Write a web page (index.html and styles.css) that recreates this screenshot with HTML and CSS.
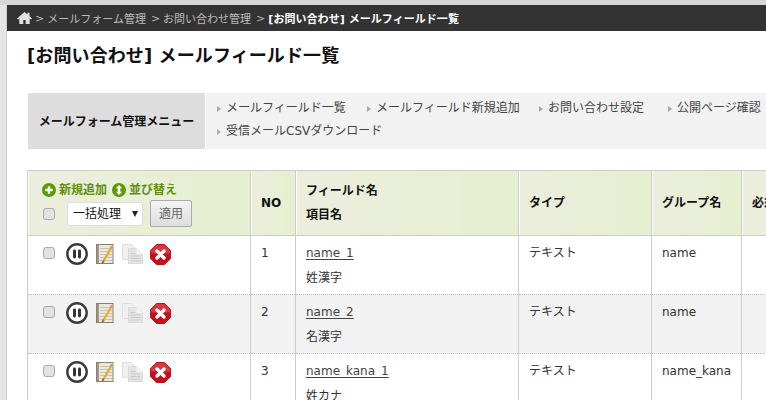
FILE: index.html
```html
<!DOCTYPE html>
<html lang="ja">
<head>
<meta charset="utf-8">
<title>メールフィールド一覧</title>
<link rel="stylesheet" href="styles.css">
</head>
<body>
<svg class="defs" width="0" height="0">
  <defs>
    <symbol id="pause" viewBox="0 0 22 22">
      <circle cx="11" cy="11" r="9.700" fill="#fff" stroke="#3a3a3a" stroke-width="2.400"/>
      <rect x="7" y="6.500" width="3" height="9" rx="1.400" fill="#333"/>
      <rect x="12" y="6.500" width="3" height="9" rx="1.400" fill="#333"/>
    </symbol>
    <symbol id="edit" viewBox="0 0 18 20">
      <rect x=".5" y=".5" width="16.500" height="19" fill="#ece8df" stroke="#8d7d6a"/>
      <rect x="1" y="1" width="2" height="18" fill="#a39887"/>
      <path d="M4 4.500h12M4 7.500h12M4 10.500h12M4 13.500h12M4 16.500h12" stroke="#bdb7ab" stroke-width=".8"/>
      <path d="M16 2.500 7 18" stroke="#e2ae2c" stroke-width="2.200"/>
      <path d="M16 2.500 14.900 4.400" stroke="#ee8a70" stroke-width="2.400"/>
      <path d="M7.800 16.600 6.200 19.400" stroke="#8a6a30" stroke-width="1.600"/>
    </symbol>
    <symbol id="copy" viewBox="0 0 21 20">
      <path d="M.5.500h9l3 3v12H.5z" fill="#f0f0f0" stroke="#e0e0e0"/>
      <path d="M6.500 4.500h8l6 5.500v9.500h-14z" fill="#e4e4e4" stroke="#dadada"/>
      <path d="M14.500 4.500v5.500h6z" fill="#f4f4f4"/>
      <path d="M8.500 9.500h5M8.500 12h10M8.500 14.500h10M8.500 17h10" stroke="#cbcbcb"/>
    </symbol>
    <symbol id="del" viewBox="0 0 21 21">
      <path d="M6.500 .5h8L20.500 6.500v8L14.500 20.500h-8L.5 14.500v-8z" fill="#c3101c" stroke="#c3101c" stroke-linejoin="round"/>
      <path d="M6.500 1h8l5.500 5.500v3H1v-3z" fill="#d63a40"/>
      <path d="M7 7l7 7M14 7l-7 7" stroke="#fff" stroke-width="3.400" stroke-linecap="round"/>
    </symbol>
  </defs>
</svg>
<div class="page">
  <nav class="crumbs">
    <svg class="home" viewBox="0 0 15 12" width="15" height="12"><path d="M7.500 0 0 6.500l1 1L2.300 6.400V12h4V8h2.400v4h4V6.400L14 7.500l1-1-2.500-2.200V.8h-2v1.800z" fill="#e2e2e2"/></svg>
    <span class="sep">&gt;</span><span>メールフォーム管理</span>
    <span class="sep">&gt;</span><span>お問い合わせ管理</span>
    <span class="sep">&gt;</span><b class="current">[お問い合わせ] メールフィールド一覧</b>
  </nav>
  <main class="content">
    <h1 class="title">[お問い合わせ] メールフィールド一覧</h1>
    <section class="menu">
      <h2 class="menu-head">メールフォーム管理メニュー</h2>
      <ul class="menu-list">
        <li class="w150">メールフィールド一覧</li>
        <li class="w172">メールフィールド新規追加</li>
        <li class="w129">お問い合わせ設定</li>
        <li class="w95">公開ページ確認</li>
        <li>受信メールCSVダウンロード</li>
      </ul>
    </section>
    <table class="grid">
      <colgroup><col class="c1"><col class="c2"><col class="c3"><col class="c4"><col class="c5"><col class="c6"></colgroup>
      <thead>
        <tr>
          <th class="tools">
            <div class="actions">
              <a class="act"><svg viewBox="0 0 14 14" width="14" height="14"><circle cx="7" cy="7" r="7" fill="#5b9a00"/><path d="M7 3.300v7.400M3.300 7h7.400" stroke="#fff" stroke-width="2.400"/></svg>新規追加</a>
              <a class="act"><svg viewBox="0 0 14 14" width="14" height="14"><circle cx="7" cy="7" r="7" fill="#5b9a00"/><path d="M7 2 10.200 5.300H8.300v3.400h1.900L7 12 3.800 8.700h1.900V5.300H3.800z" fill="#fff"/></svg>並び替え</a>
            </div>
            <div class="bulk">
              <span class="check"></span>
              <span class="select">一括処理<i class="arrow"></i></span>
              <span class="apply">適用</span>
            </div>
          </th>
          <th>NO</th>
          <th><div class="two">フィールド名</div><div class="two">項目名</div></th>
          <th>タイプ</th>
          <th>グループ名</th>
          <th>必須</th>
        </tr>
      </thead>
      <tbody>
        <tr>
          <td class="row-tools"><span class="check"></span><svg class="i-pause"><use href="#pause"/></svg><svg class="i-edit"><use href="#edit"/></svg><svg class="i-copy"><use href="#copy"/></svg><svg class="i-del"><use href="#del"/></svg></td>
          <td>1</td>
          <td class="field"><div class="two"><a class="link">name_1</a></div><div class="two">姓漢字</div></td>
          <td>テキスト</td><td>name</td><td></td>
        </tr>
        <tr class="alt">
          <td class="row-tools"><span class="check"></span><svg class="i-pause"><use href="#pause"/></svg><svg class="i-edit"><use href="#edit"/></svg><svg class="i-copy"><use href="#copy"/></svg><svg class="i-del"><use href="#del"/></svg></td>
          <td>2</td>
          <td class="field"><div class="two"><a class="link">name_2</a></div><div class="two">名漢字</div></td>
          <td>テキスト</td><td>name</td><td></td>
        </tr>
        <tr>
          <td class="row-tools"><span class="check"></span><svg class="i-pause"><use href="#pause"/></svg><svg class="i-edit"><use href="#edit"/></svg><svg class="i-copy"><use href="#copy"/></svg><svg class="i-del"><use href="#del"/></svg></td>
          <td>3</td>
          <td class="field"><div class="two"><a class="link">name_kana_1</a></div><div class="two">姓カナ</div></td>
          <td>テキスト</td><td>name_kana</td><td></td>
        </tr>
      </tbody>
    </table>
  </main>
</div>
</body>
</html>
```
FILE: styles.css
```css
* { box-sizing: border-box; }
html, body { margin: 0; height: 400px; overflow: hidden; }
body {
  background: linear-gradient(#d6d6d6 5px, #e4e4e4 5px);
  font-family: "DejaVu Sans", "Noto Sans CJK JP", sans-serif;
  font-size: 12px;
  color: #333;
  padding: 5px 0 0 6px;
}
.defs { position: absolute; }
.page { width: 760px; height: 395px; background: #fff; border-left: 1px solid #ccc; overflow: hidden; }
.crumbs {
  display: flex; align-items: center;
  height: 26px; background: #333; color: #bbb;
  font-size: 11px; padding-left: 10px; white-space: nowrap;
}
.home { margin-right: 3px; }
.sep { margin: 0 3px 0 0; }
.crumbs span + .sep { margin-left: 5px; }
.current { color: #fff; letter-spacing: .05px; }
.content { padding: 0 0 0 21px; }
.title { margin: 0 0 0 -1px; padding-top: 13px; height: 62px; font-size: 18px; line-height: 24px; letter-spacing: .1px; color: #111; white-space: nowrap; font-weight: bold; }
.menu { display: flex; width: 745px; height: 56px; margin-bottom: 21px; }
.menu-head {
  flex: none; width: 177px; margin: 0 1px 0 0; background: #ddd; padding-bottom: 2px;
  display: flex; align-items: center; justify-content: center;
  font-size: 12px; font-weight: bold; color: #111;
}
.menu-list {
  flex: 1; margin: 0; padding: 4px 0 0 8px; list-style: none; background: #f2f2f2;
  display: flex; flex-wrap: wrap; align-content: flex-start; color: #444;
}
.menu-list li { line-height: 23px; white-space: nowrap; padding-left: 12px; position: relative; }
.menu-list li::before {
  content: ""; position: absolute; left: 3px; top: 9px;
  border-left: 4px solid #aaa; border-top: 3px solid transparent; border-bottom: 3px solid transparent;
}
.menu-list .w150 { width: 150px; }
.menu-list .w172 { width: 172px; }
.menu-list .w129 { width: 129px; }
.menu-list .w95 { width: 96px; }
.grid { border-collapse: collapse; table-layout: fixed; width: 850px; margin-left: -1px; }
.c1 { width: 223px; } .c2 { width: 45px; } .c3 { width: 223px; }
.c4 { width: 133px; } .c5 { width: 90px; } .c6 { width: 136px; }
.grid th, .grid td { border: 1px solid #ccc; text-align: left; padding: 0 10px; line-height: 18px; }
.grid th {
  height: 65px; background: linear-gradient(to right, #ebeedd, #e6efd0);
  color: #111; font-weight: bold; box-shadow: inset 1px 0 #fff; vertical-align: middle;
}
.grid td { height: 59px; vertical-align: top; padding-top: 8px; border-top: 1px dotted #bbb; border-bottom: 1px dotted #bbb; }
.grid tr:first-child td { border-top: 0; }
.alt td { background: #f2f2f2; }
.grid td.field { padding-top: 5px; }
.two { line-height: 24px; white-space: nowrap; }
.field .two + .two { margin-top: 1px; }
.link { color: #444; text-decoration: underline; text-underline-offset: 2px; }
.grid .tools { padding: 9px 0 0 14px; vertical-align: top; }
.actions { display: flex; gap: 5px; height: 20px; align-items: center; }
.act { display: flex; align-items: center; gap: 3px; color: #5f8f10; font-size: 12px; }
.bulk { display: flex; align-items: center; padding-left: 1px; }
.check { display: inline-block; width: 12px; height: 12px; background: #e2e2e2; border: 1px solid #aaa; border-radius: 3px; flex: none; }
.select {
  display: flex; align-items: center; justify-content: space-between;
  margin-left: 12px; width: 76px; height: 24px; background: #fff; border: 1px solid #ddd; border-radius: 3px;
  color: #111; font-weight: normal; padding: 0 4px 0 5px;
}
.arrow { border-top: 6px solid #222; border-left: 3.500px solid transparent; border-right: 3.500px solid transparent; }
.apply {
  margin-left: 7px; width: 42px; height: 27px; display: flex; align-items: center; justify-content: center;
  background: linear-gradient(#f4f4f4, #ddd); border: 1px solid #aaa; border-radius: 2px; color: #666; font-weight: normal;
}
.grid .row-tools { padding: 7px 0 0 15px; white-space: nowrap; }
.row-tools svg { vertical-align: top; }
.row-tools .check { vertical-align: top; margin-top: 4px; margin-right: 11px; }
.i-pause { width: 22px; height: 22px; margin-right: 8px; }
.i-edit { width: 18px; height: 20px; margin: 1px 8px 0 0; }
.i-copy { width: 21px; height: 20px; margin: 1px 7px 0 0; }
.i-del { width: 21px; height: 21px; margin-top: 1px; }
```
